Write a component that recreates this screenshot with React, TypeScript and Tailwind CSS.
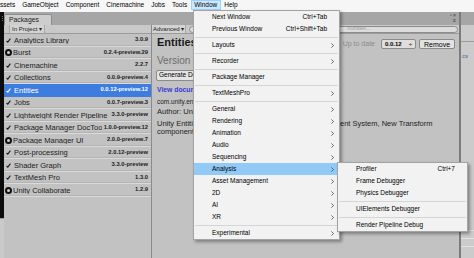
import React from "react";

type Pkg = { name: string; version: string; icon: "check" | "ring"; selected?: boolean };

const packages: Pkg[] = [
    { name: "Analytics Library", version: "3.0.9", icon: "check" },
    { name: "Burst", version: "0.2.4-preview.29", icon: "ring" },
    { name: "Cinemachine", version: "2.2.7", icon: "check" },
    { name: "Collections", version: "0.0.9-preview.4", icon: "check" },
    { name: "Entities", version: "0.0.12-preview.12", icon: "check", selected: true },
    { name: "Jobs", version: "0.0.7-preview.3", icon: "check" },
    { name: "Lightweight Render Pipeline", version: "3.3.0-preview", icon: "check" },
    { name: "Package Manager DocTools", version: "1.0.0-preview.12", icon: "check" },
    { name: "Package Manager UI", version: "2.0.0-preview.7", icon: "ring" },
    { name: "Post-processing", version: "2.0.12-preview", icon: "check" },
    { name: "Shader Graph", version: "3.3.0-preview", icon: "check" },
    { name: "TextMesh Pro", version: "1.3.0", icon: "check" },
    { name: "Unity Collaborate", version: "1.2.9", icon: "ring" },
];

type MenuItem = { label: string; shortcut?: string; sub?: boolean; active?: boolean } | "sep";

const windowMenu: MenuItem[] = [
    { label: "Next Window", shortcut: "Ctrl+Tab" },
    { label: "Previous Window", shortcut: "Ctrl+Shift+Tab" },
    "sep",
    { label: "Layouts", sub: true },
    "sep",
    { label: "Recorder", sub: true },
    "sep",
    { label: "Package Manager" },
    "sep",
    { label: "TextMeshPro", sub: true },
    "sep",
    { label: "General", sub: true },
    { label: "Rendering", sub: true },
    { label: "Animation", sub: true },
    { label: "Audio", sub: true },
    { label: "Sequencing", sub: true },
    { label: "Analysis", sub: true, active: true },
    { label: "Asset Management", sub: true },
    { label: "2D", sub: true },
    { label: "AI", sub: true },
    { label: "XR", sub: true },
    "sep",
    { label: "Experimental", sub: true },
];

const analysisMenu: MenuItem[] = [
    { label: "Profiler", shortcut: "Ctrl+7" },
    { label: "Frame Debugger" },
    { label: "Physics Debugger" },
    "sep",
    { label: "UIElements Debugger" },
    "sep",
    { label: "Render Pipeline Debug" },
];

const menuBar = ["ssets", "GameObject", "Component", "Cinemachine", "Jobs", "Tools", "Window", "Help"];

const Check: React.FC = () => (
    <svg width="5" height="5" viewBox="0 0 5 5">
        <path d="M0.5 2.9 L1.8 4.2 L4.4 0.7" fill="none" stroke="currentColor" strokeWidth="1.1" />
    </svg>
);

const Chevron: React.FC = () => (
    <svg width="3" height="5" viewBox="0 0 3 5">
        <path d="M0.4 0.4 L2.5 2.5 L0.4 4.6" fill="none" stroke="#444" strokeWidth="0.8" />
    </svg>
);

const PackageRow: React.FC<{ pkg: Pkg }> = ({ pkg }) => (
    <div
        className={`h-[12.5px] flex items-center pr-[3px] ${
            pkg.selected
                ? "bg-[#3d7de0] text-white"
                : "text-[#1c1c1c] shadow-[inset_0_-1px_0_#dadada,inset_0_-2px_0_#b4b4b4]"
        }`}
    >
        {pkg.icon === "check" ? (
            <span className="w-[10px] pl-[2px] flex items-center shrink-0">
                <Check />
            </span>
        ) : (
            <span className="ml-[1px] mr-[1px] w-[7px] h-[7px] rounded-full border-[2px] border-[#111] bg-[#cfcfcf] shrink-0" />
        )}
        <span className="flex-1 min-w-0 overflow-hidden whitespace-nowrap text-[7.5px] leading-none">
            {pkg.name}
        </span>
        <span className="shrink-0 ml-[2px] text-[5.8px] font-bold leading-none whitespace-nowrap">
            {pkg.version}
        </span>
    </div>
);

const Menu: React.FC<{ items: MenuItem[]; className: string }> = ({ items, className }) => (
    <div
        className={`absolute bg-[#f2f2f2] border border-[#a3a3a3] shadow-[2px_2px_3px_rgba(0,0,0,0.35)] text-[6.5px] leading-none text-black ${className}`}
    >
        {items.map((item, i) =>
            item === "sep" ? (
                <div key={i} className="h-[4px] flex items-center">
                    <div className="flex-1 h-px bg-[#d5d5d5] mx-[1px]" />
                </div>
            ) : (
                <div
                    key={i}
                    className={`h-[12px] flex items-center pl-[18px] mr-[2px] ${
                        item.active ? "bg-[#91c9f7]" : ""
                    }`}
                >
                    <span className="flex-1 whitespace-nowrap">{item.label}</span>
                    {item.shortcut && <span className="whitespace-nowrap">{item.shortcut}</span>}
                    <span className="w-[10px] flex justify-center shrink-0">{item.sub && <Chevron />}</span>
                </div>
            )
        )}
    </div>
);

export default function App() {
    return (
        <div className="w-[474px] h-[258px] relative overflow-hidden bg-[#c2c2c2] font-['Liberation_Sans',Arial,sans-serif] text-black">
            {/* menu bar */}
            <div className="h-[12px] bg-[#f6f6f6] flex items-start ml-[-3.5px] text-[6.5px] leading-none">
                {menuBar.map((m) => (
                    <div
                        key={m}
                        className={`h-[10px] px-[3.5px] flex items-center ${
                            m === "Window" ? "bg-[#cce8ff] shadow-[inset_0_0_0_1px_#99d1ff]" : ""
                        }`}
                    >
                        {m}
                    </div>
                ))}
            </div>

            <div className="flex h-[246px]">
                {/* left edge of another panel */}
                <div className="w-[4px] flex flex-col">
                    <div className="h-[206px] bg-[#0c0c0c] flex flex-col items-center pt-[4px] gap-[1px]">
                        <span className="w-[1px] h-[1px] bg-[#777]" />
                        <span className="w-[1px] h-[1px] bg-[#777]" />
                        <span className="w-[1px] h-[1px] bg-[#777]" />
                    </div>
                    <div className="flex-1 bg-[#cacaca] border-t border-[#9a9a9a]" />
                </div>

                {/* Packages window */}
                <div className="w-[455px] flex flex-col">
                    <div className="h-[13px] bg-[#a6a6a6] flex items-end justify-between">
                        <div className="h-[11px] w-[48px] bg-[#cdcdcd] rounded-t-[2px] border-t border-x border-[#8e8e8e] flex items-center pl-[4px] text-[6.8px] leading-none text-[#222]">
                            Packages
                        </div>
                        <div className="self-start flex flex-col items-end pr-[3px] pt-[1px] text-[5px] leading-[5px] text-[#333]">
                            <span>▫ ×</span>
                            <span>≡</span>
                        </div>
                    </div>

                    <div className="flex flex-1 min-h-0">
                        {/* package list */}
                        <div className="w-[148px] flex flex-col border-r border-[#8a8a8a]">
                            <div className="h-[9px] bg-[#c9c9c9] border-b border-[#9a9a9a] flex items-stretch">
                                <div className="ml-[5px] px-[2px] border-x border-[#a8a8a8] bg-[#d3d3d3] flex items-center text-[6px] leading-none text-[#222]">
                                    In Project ▾
                                </div>
                            </div>
                            {packages.map((p) => (
                                <PackageRow key={p.name} pkg={p} />
                            ))}
                        </div>

                        {/* details */}
                        <div className="flex-1 flex flex-col">
                            <div className="h-[9px] bg-[#c9c9c9] border-b border-[#9a9a9a] flex items-center">
                                <div className="h-full px-[1px] border-r border-[#a8a8a8] bg-[#d3d3d3] flex items-center text-[6px] leading-none text-[#222]">
                                    Advanced ▾
                                </div>
                                <div className="ml-[3px] mr-[1px] flex-1 h-[7px] rounded-full bg-[#dcdcdc] border border-[#8d8d8d] flex items-center pl-[157px] text-[5.5px] leading-none text-[#9a9a9a]">
                                    number...
                                </div>
                            </div>

                            <div className="pl-[5px] pr-[4px] flex flex-col">
                                <div className="h-[18px] flex justify-between items-start">
                                    <span className="mt-[2px] text-[11px] leading-[12px] font-bold text-[#1a1a1a]">
                                        Entities
                                    </span>
                                    <div className="mt-[5px] h-[10px] flex items-center gap-[3px]">
                                        <span className="mr-[3px] text-[7px] text-[#8b8b8b]">Up to date</span>
                                        <span className="h-full w-[35px] border border-[#8b8b8b] rounded-[2px] bg-[#dedede] flex items-center justify-between px-[3px] text-[6px] font-bold leading-none">
                                            <span>0.0.12</span>
                                            <span>÷</span>
                                        </span>
                                        <span className="h-full w-[36px] border border-[#8b8b8b] rounded-[2px] bg-[#e2e2e2] flex items-center justify-center text-[7px] leading-none">
                                            Remove
                                        </span>
                                    </div>
                                </div>

                                <span className="mt-[3px] text-[10px] leading-[12px] text-[#6d6d6d]">
                                    Version 0.0.12-preview.12
                                </span>
                                <div className="mt-[3px] -ml-[1px] h-[11px] w-[90px] border border-[#8b8b8b] rounded-[2px] bg-[#e4e4e4] flex items-center pl-[2px] text-[6.5px] leading-none">
                                    Generate Documentation
                                </div>
                                <span className="mt-[5px] text-[6.8px] leading-[8px] font-bold text-[#3a3ad4]">
                                    View documentation
                                </span>
                                <span className="mt-[4px] text-[6.5px] leading-[7px] text-[#222]">
                                    com.unity.entities
                                </span>
                                <span className="mt-[3px] text-[7.5px] leading-[8px] text-[#222]">
                                    Author: Unity Technologies Inc.
                                </span>
                                <div className="mt-[4px] text-[7.5px] leading-[8px] text-[#222] whitespace-nowrap">
                                    <div>Unity Entities is the core package of the Entity Component System, New Transform</div>
                                    <div>components, Math library and more.</div>
                                </div>
                            </div>
                        </div>
                    </div>
                </div>

                {/* right edge of inspector */}
                <div className="w-[15px] flex flex-col border-l-2 border-[#7c7c7c] bg-[#cbcbcb]">
                    <div className="h-[13px] bg-[#a6a6a6]" />
                    <div className="h-[17px] border-b border-[#9c9c9c]" />
                    <div className="mt-[11px] pl-[1px] text-[6px] leading-none text-[#4a5fa8]">cs</div>
                    <div className="flex-1" />
                    <div className="h-[8px] border-t border-[#e2e2e2]" />
                    <div className="h-[8px] border-t border-[#e2e2e2]" />
                    <div className="h-[12px] border-t border-[#e2e2e2]" />
                </div>
            </div>

            <Menu items={windowMenu} className="left-[193px] top-[10px] w-[147px]" />
            <Menu items={analysisMenu} className="left-[337px] top-[162px] w-[131px]" />
        </div>
    );
}
